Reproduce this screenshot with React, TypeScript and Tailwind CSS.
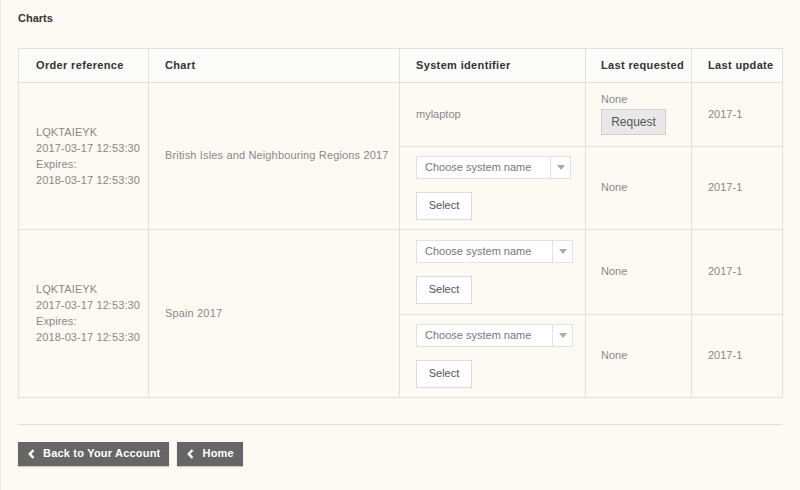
const font = { fontFamily: '"Liberation Sans", Arial, sans-serif' }

function Chevron() {
  return (
    <svg width="7" height="10" viewBox="0 0 7 10">
      <path d="M5.5 1L1.8 5l3.7 4" fill="none" stroke="#fff" strokeWidth="2.4" />
    </svg>
  )
}

function ChooseSystem({ wide }: { wide?: boolean }) {
  return (
    <div
      className={`flex h-[23px] items-stretch border border-[#e2e2e2] bg-white ${wide ? 'w-[157px]' : 'w-[155px]'}`}
    >
      <div className="flex flex-1 items-center pl-[8px] text-[11px] text-[#777]">Choose system name</div>
      <div className="flex w-[20px] items-center justify-center border-l border-[#e2e2e2]">
        <svg width="8" height="5" viewBox="0 0 8 5">
          <path d="M0 0h8L4 5z" fill="#aaa" />
        </svg>
      </div>
    </div>
  )
}

function SelectCell({ wide }: { wide?: boolean }) {
  return (
    <td className="border border-[#e2e0db] px-[16px] align-middle">
      <ChooseSystem wide={wide} />
      <button className="mt-[13px] flex h-[28px] w-[56px] items-center justify-center border border-[#dcdcdc] bg-white text-[11px] text-[#555]">
        Select
      </button>
    </td>
  )
}

function OrderCell() {
  return (
    <td rowSpan={2} className="border border-[#e2e0db] pl-[17px] align-middle text-[11px] leading-[16px] tracking-[0.1px] text-[#888]">
      LQKTAIEYK
      <br />
      2017-03-17 12:53:30
      <br />
      Expires:
      <br />
      2018-03-17 12:53:30
    </td>
  )
}

export default function App() {
  const th = 'border border-[#e2e0db] text-left font-bold text-[11px] tracking-[0.35px] text-[#333]'
  const td = 'border border-[#e2e0db] align-middle text-[11px] text-[#888]'
  return (
    <div style={font} className="h-[490px] w-[800px] border-l border-[#ece9e2] bg-[#fdfaf4] px-[17px] pt-[10px]">
      <div className="text-[11px] font-bold text-[#333]">Charts</div>

      <table className="mt-[21px] w-[764px] table-fixed border-collapse">
        <colgroup>
          <col className="w-[130px]" />
          <col className="w-[251px]" />
          <col className="w-[186px]" />
          <col className="w-[106px]" />
          <col className="w-[91px]" />
        </colgroup>
        <thead>
          <tr className="h-[34px] bg-[#fcfcfb]">
            <th className={`${th} pl-[17px]`}>Order reference</th>
            <th className={`${th} pl-[16px]`}>Chart</th>
            <th className={`${th} pl-[16px]`}>System identifier</th>
            <th className={`${th} pl-[15px]`}>Last requested</th>
            <th className={`${th} pl-[16px]`}>Last update</th>
          </tr>
        </thead>
        <tbody>
          <tr className="h-[64px]">
            <OrderCell />
            <td rowSpan={2} className={`${td} pl-[16px] tracking-[0.15px]`}>
              British Isles and Neighbouring Regions 2017
            </td>
            <td className={`${td} pl-[16px]`}>mylaptop</td>
            <td className={`${td} pl-[15px]`}>
              <div className="leading-[13px]">None</div>
              <button className="mt-[3px] flex h-[26px] w-[65px] items-center justify-center border border-[#cfcfcf] bg-[#e8e8e8] text-[12px] text-[#555]">
                Request
              </button>
            </td>
            <td className={`${td} pl-[16px]`}>2017-1</td>
          </tr>
          <tr className="h-[83px]">
            <SelectCell />
            <td className={`${td} pl-[15px]`}>None</td>
            <td className={`${td} pl-[16px]`}>2017-1</td>
          </tr>
          <tr className="h-[85px]">
            <OrderCell />
            <td rowSpan={2} className={`${td} pl-[16px] tracking-[0.15px]`}>
              Spain 2017
            </td>
            <SelectCell wide />
            <td className={`${td} pl-[15px]`}>None</td>
            <td className={`${td} pl-[16px]`}>2017-1</td>
          </tr>
          <tr className="h-[83px]">
            <SelectCell wide />
            <td className={`${td} pl-[15px]`}>None</td>
            <td className={`${td} pl-[16px]`}>2017-1</td>
          </tr>
        </tbody>
      </table>

      <div className="mt-[26px] w-[764px] border-t border-[#e2e0db]" />

      <div className="mt-[17px] flex gap-[8px]">
        <button className="flex h-[24px] items-center gap-[8px] bg-[#666] pl-[10px] pr-[9px] text-[11px] font-bold tracking-[0.2px] text-white shadow-[0_1px_1px_rgba(0,0,0,0.2)]">
          <Chevron />
          Back to Your Account
        </button>
        <button className="flex h-[24px] items-center gap-[8px] bg-[#666] pl-[10px] pr-[9px] text-[11px] font-bold tracking-[0.2px] text-white shadow-[0_1px_1px_rgba(0,0,0,0.2)]">
          <Chevron />
          Home
        </button>
      </div>
    </div>
  )
}
